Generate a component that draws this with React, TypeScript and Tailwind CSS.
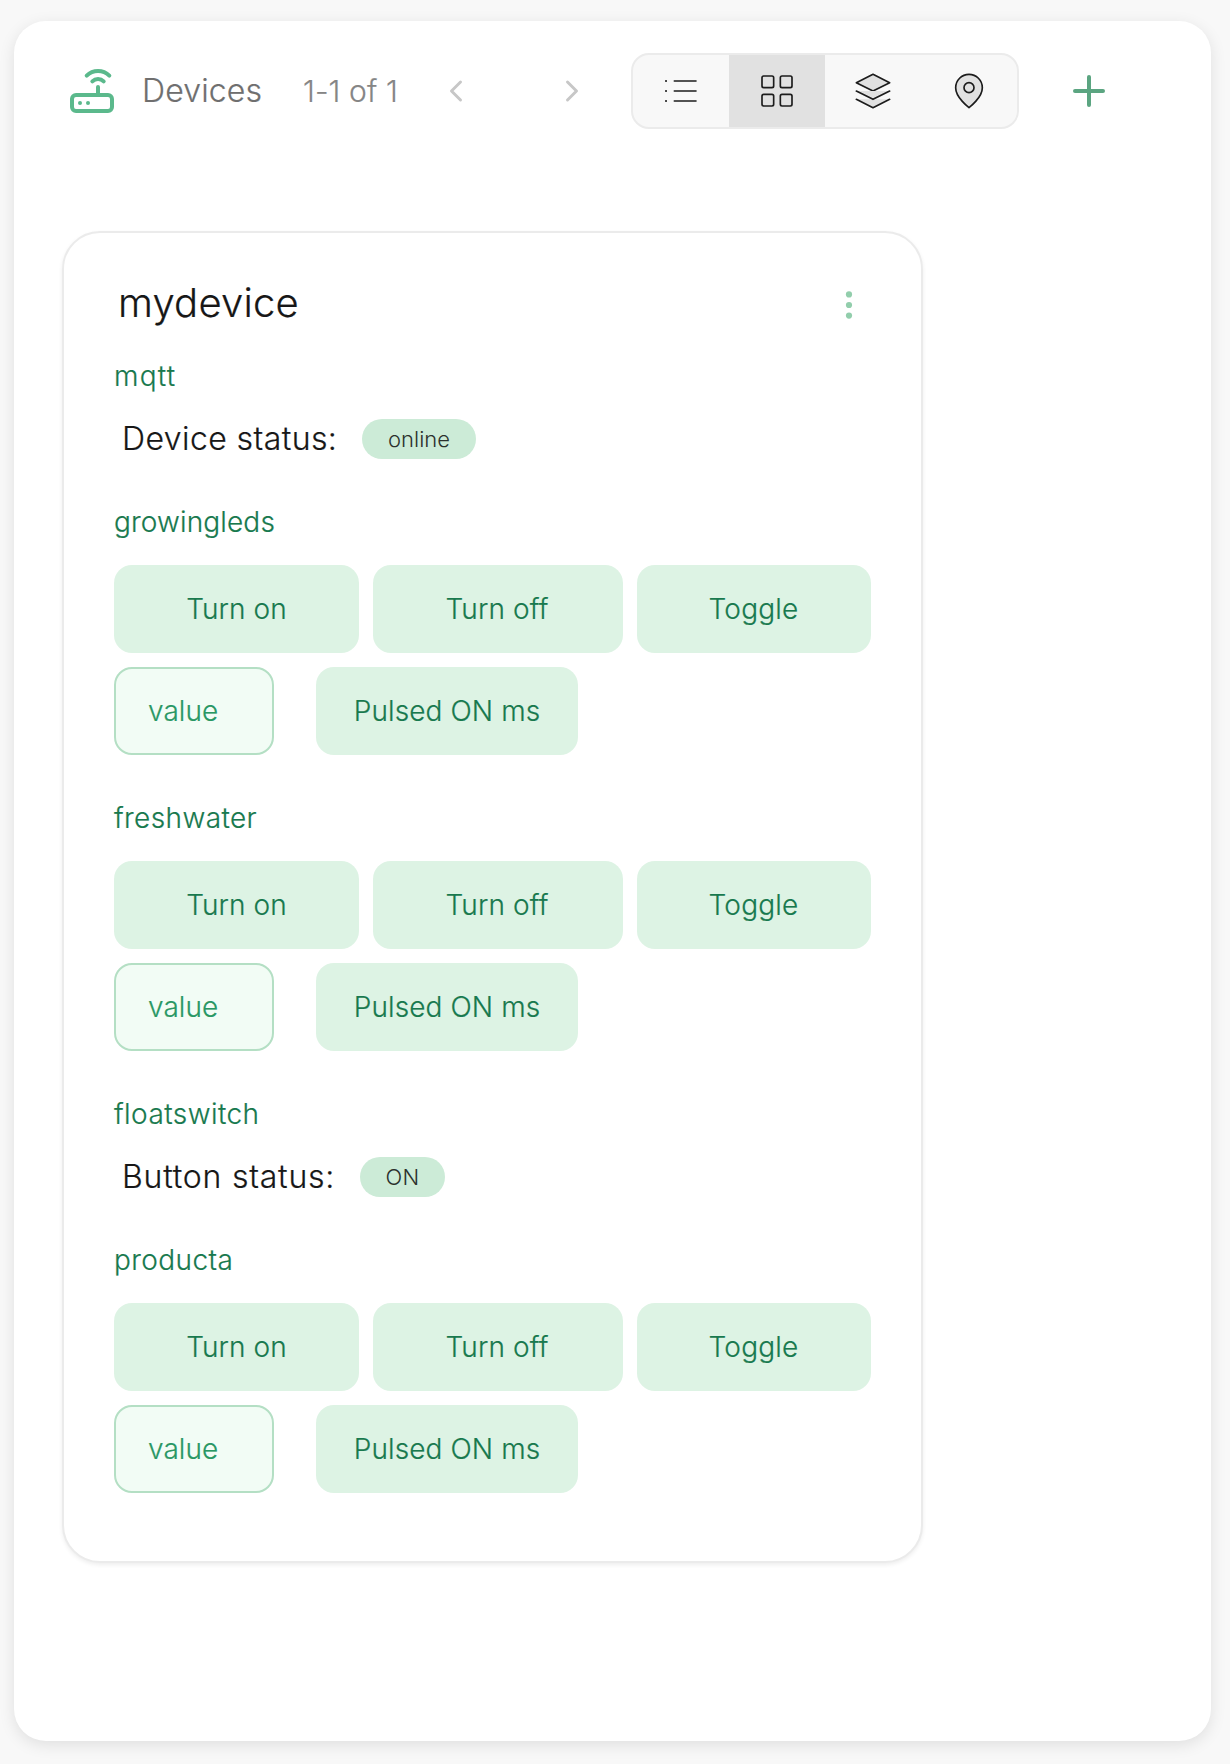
import React from "react";
import { Router, ChevronLeft, ChevronRight, LayoutGrid, Plus } from "lucide-react";

function ListIcon() {
  return (
    <svg width="40" height="40" viewBox="0 0 24 24" fill="none" stroke="#1c1c1c" strokeWidth="1" strokeLinecap="round" strokeLinejoin="round">
      <path d="M8 6h13M8 12h13M8 18h13" />
      <path d="M3 6h.01M3 12h.01M3 18h.01" strokeWidth="1.15" strokeLinecap="square" strokeOpacity="0.8" />
    </svg>
  );
}

function LayersIcon() {
  return (
    <svg width="40" height="40" viewBox="0 0 24 24" fill="#e1e1e1" stroke="#1c1c1c" strokeWidth="1" strokeLinecap="round" strokeLinejoin="round">
      <polygon points="12 2 2 7 12 12 22 7 12 2" />
      <polyline points="2 17 12 22 22 17" />
      <polyline points="2 12 12 17 22 12" />
    </svg>
  );
}

function PinIcon() {
  return (
    <svg width="40" height="40" viewBox="0 0 24 24" fill="#e1e1e1" stroke="#1c1c1c" strokeWidth="1" strokeLinecap="round" strokeLinejoin="round">
      <path d="M20 10c0 6-8 12-8 12s-8-6-8-12a8 8 0 0 1 16 0Z" />
      <circle cx="12" cy="10" r="3" />
    </svg>
  );
}

function Section({ name, spacing, children }: { name: string; spacing: string; children: React.ReactNode }) {
  return (
    <section className="pb-[43px]">
      <h3 className={`mb-[23px] text-[28px] leading-10 text-[#18794e] ${spacing}`}>{name}</h3>
      {children}
    </section>
  );
}

function Status({ label, value, spacing, pill }: { label: string; value: string; spacing: string; pill: string }) {
  return (
    <div className="flex h-10 items-center pl-2">
      <span className={`shrink-0 whitespace-nowrap text-[32px] leading-10 text-[#171717] ${spacing}`}>{label}</span>
      <span className={`flex h-10 items-center justify-center rounded-full bg-[#ccebd7] text-[22px] text-[#2b312d] [-webkit-text-stroke:0px] ${pill}`}>{value}</span>
    </div>
  );
}

const button = "flex h-[88px] items-center justify-center rounded-[18px] bg-[#ddf3e4] text-[28px] text-[#18794e] whitespace-nowrap";

function Controls() {
  return (
    <div className="flex flex-col gap-[14px]">
      <div className="flex gap-[14px]">
        <button className={`${button} w-[245px] tracking-[0.1px]`}>Turn on</button>
        <button className={`${button} w-[250px] pr-0.5 tracking-[0.15px]`}>Turn off</button>
        <button className={`${button} w-[234px] pr-px tracking-[0.2px]`}>Toggle</button>
      </div>
      <div className="flex gap-[42px]">
        <div className="flex h-[88px] w-[160px] items-center rounded-[18px] border-2 border-[#b4dfc4] bg-[#f2fcf5] pl-8 text-[28px] tracking-[0.08px] text-[#299764]">value</div>
        <button className={`${button} w-[262px] tracking-[0.1px]`}>Pulsed ON ms</button>
      </div>
    </div>
  );
}

export default function App() {
  return (
    <div className="h-[1764px] w-[1230px] bg-[#f8f8f8] pl-[14px] pt-[21px] font-['Inter',sans-serif] font-light [-webkit-text-stroke:0.2px]">
      <main className="h-[1720px] w-[1197px] rounded-[32px] bg-white px-12 pt-8 shadow-[0_4px_16px_rgba(0,0,0,0.1)]">
        <header className="flex h-[76px] items-center pl-[6px]">
          <Router size={48} color="#5bb98c" strokeWidth={2} className="shrink-0" />
          <h1 className="w-[161px] shrink-0 pl-[26px] text-[32px] tracking-[0.15px] text-[#6f6f6f]">Devices</h1>
          <span className="w-[161px] shrink-0 whitespace-nowrap pl-[26px] text-[30px] tracking-[0.1px] text-[#858585]">1-1 of 1</span>
          <div className="flex w-[193px] shrink-0 gap-20">
            <ChevronLeft size={36} color="#c7c7c7" strokeWidth={2} />
            <ChevronRight size={36} color="#c7c7c7" strokeWidth={2} />
          </div>
          <div className="flex h-[76px] w-[388px] shrink-0 overflow-hidden rounded-[18px] border-2 border-[#ebebeb] bg-[#f8f8f8]">
            <button className="flex w-24 items-center justify-center"><ListIcon /></button>
            <button className="flex w-24 items-center justify-center bg-[#e1e1e1]">
              <LayoutGrid size={40} color="#1c1c1c" strokeWidth={1} />
            </button>
            <button className="flex w-24 items-center justify-center"><LayersIcon /></button>
            <button className="flex w-24 items-center justify-center"><PinIcon /></button>
          </div>
          <Plus size={48} color="#5ba581" strokeWidth={2} className="ml-[46px] shrink-0" />
        </header>

        <article className="mt-[102px] h-[1332px] w-[861px] rounded-[38px] border-2 border-[#ebebeb] bg-white pl-[50px] pt-[46px] shadow-[0_2px_4px_rgba(0,0,0,0.07)]">
          <div className="mb-[29px] flex h-12 items-center justify-between pl-1 pr-[66px]">
            <h2 className="text-[40px] leading-[48px] tracking-[0.2px] text-[#171717]">mydevice</h2>
            <svg width="12" height="32" viewBox="0 0 12 32" fill="#92ceac" className="mt-1">
              <circle cx="6" cy="5.4" r="3.1" />
              <circle cx="6" cy="16" r="3.1" />
              <circle cx="6" cy="26.6" r="3.1" />
            </svg>
          </div>
          <Section name="mqtt" spacing="tracking-[1.25px]">
            <Status label="Device status:" value="online" spacing="tracking-[0.42px] w-[217px]" pill="ml-[23px] w-[114px]" />
          </Section>
          <Section name="growingleds" spacing="tracking-[0.15px]"><Controls /></Section>
          <Section name="freshwater" spacing="tracking-[0.4px]"><Controls /></Section>
          <Section name="floatswitch" spacing="tracking-[0.45px]">
            <Status label="Button status:" value="ON" spacing="tracking-[0.77px] w-[215px]" pill="ml-[23px] w-[85px] tracking-[0.3px]" />
          </Section>
          <Section name="producta" spacing="tracking-[0.4px]"><Controls /></Section>
        </article>
      </main>
    </div>
  );
}
